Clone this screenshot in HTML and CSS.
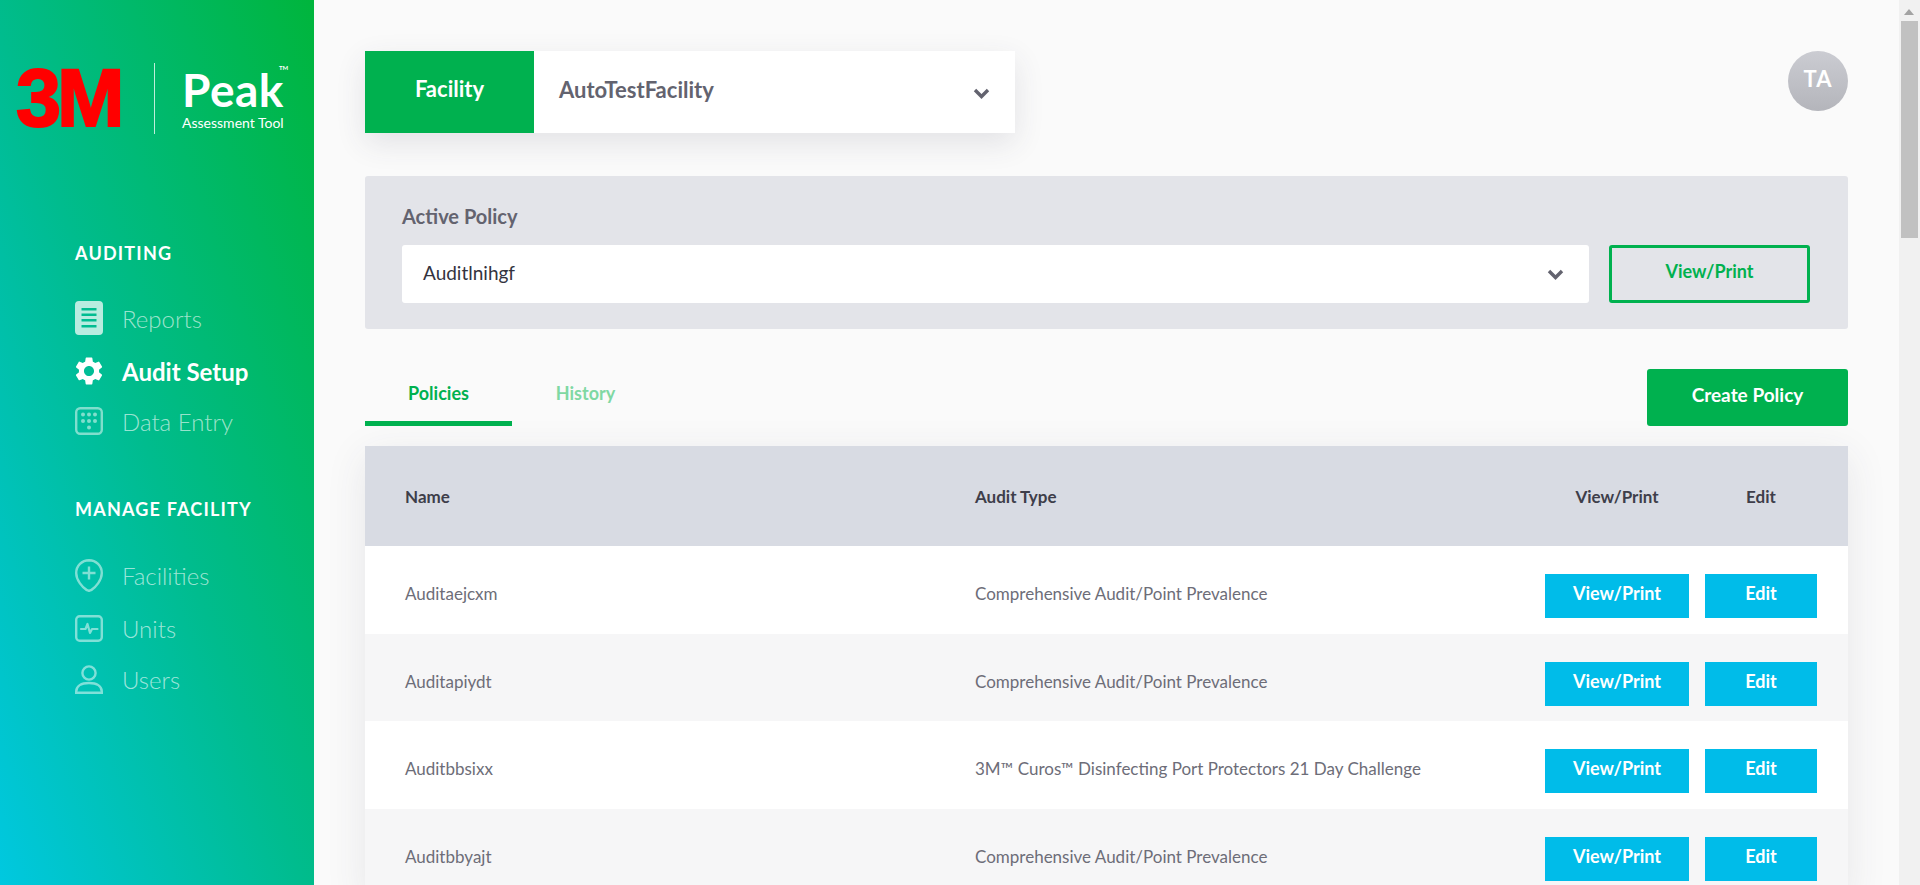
FILE: index.html
```html
<!DOCTYPE html>
<html lang="en">
<head>
<meta charset="utf-8">
<title>3M Peak Assessment Tool</title>
<link rel="stylesheet" href="styles.css">
</head>
<body>
<div class="app">
  <aside class="sidebar">
    <div class="brand">
      <div class="logo-3m">3M</div>
      <div class="brand-rule"></div>
      <div class="brand-name">
        <div class="peak">Peak<span class="tm">TM</span></div>
        <div class="tool">Assessment Tool</div>
      </div>
    </div>
    <nav class="nav">
      <h2 class="nav-title">AUDITING</h2>
      <a class="nav-item nav-reports">
        <svg class="nav-icon" viewBox="0 0 28 34" width="28" height="34"><path fill="#fff" fill-rule="evenodd" d="M4 0h20a4 4 0 0 1 4 4v26a4 4 0 0 1-4 4H4a4 4 0 0 1-4-4V4a4 4 0 0 1 4-4zM6.500 7v2.500h15V7zM6.500 12.500V15h15v-2.500zM6.500 18v2.500h15V18zM6.500 24v2.500h15V24z"/></svg>
        <span>Reports</span>
      </a>
      <a class="nav-item nav-setup active">
        <svg class="nav-icon" viewBox="2.200 2 19.600 20" width="28" height="28"><path fill="#fff" d="M19.140 12.940c.04-.3.06-.61.06-.94 0-.32-.02-.64-.07-.94l2.030-1.580a.49.49 0 0 0 .12-.61l-1.920-3.320a.488.488 0 0 0-.59-.22l-2.390.96c-.5-.38-1.030-.7-1.620-.94l-.36-2.540a.484.484 0 0 0-.48-.41h-3.840c-.24 0-.43.17-.47.41l-.36 2.540c-.59.24-1.130.57-1.620.94l-2.390-.96c-.22-.08-.47 0-.59.22L2.740 8.870c-.12.21-.08.47.12.61l2.030 1.580c-.05.3-.09.63-.09.94s.02.64.07.94l-2.030 1.580a.49.49 0 0 0-.12.61l1.920 3.320c.12.22.37.29.59.22l2.390-.96c.5.38 1.030.7 1.620.94l.36 2.540c.05.24.24.41.48.41h3.840c.24 0 .44-.17.47-.41l.36-2.540c.59-.24 1.130-.56 1.620-.94l2.390.96c.22.08.47 0 .59-.22l1.920-3.320c.12-.22.07-.47-.12-.61l-2.010-1.580zM12 15.600c-1.980 0-3.600-1.620-3.600-3.600s1.620-3.600 3.600-3.600 3.600 1.620 3.600 3.600-1.620 3.600-3.600 3.600z"/></svg>
        <span>Audit Setup</span>
      </a>
      <a class="nav-item nav-entry">
        <svg class="nav-icon" viewBox="0 0 28 28" width="28" height="28"><rect x="1.200" y="1.200" width="25.600" height="25.600" rx="4" fill="none" stroke="#fff" stroke-width="2.400"/><g fill="#fff"><circle cx="8" cy="7.500" r="2"/><circle cx="14" cy="7.500" r="2"/><circle cx="20" cy="7.500" r="2"/><circle cx="8" cy="14" r="2"/><circle cx="14" cy="14" r="2"/><circle cx="20" cy="14" r="2"/><circle cx="14" cy="20.500" r="2"/></g></svg>
        <span>Data Entry</span>
      </a>
      <h2 class="nav-title nav-title-2">MANAGE FACILITY</h2>
      <a class="nav-item nav-fac">
        <svg class="nav-icon" viewBox="0 0 28 33" width="28" height="33"><path fill="none" stroke="#fff" stroke-width="2.400" d="M14 1.200C6.900 1.200 1.200 6.900 1.200 14c0 7 6 14.300 10.600 17.100 1.400.9 3 .9 4.400 0C20.800 28.300 26.800 21 26.800 14 26.800 6.900 21.100 1.200 14 1.200zM14 7.500v13M7.500 14h13"/></svg>
        <span>Facilities</span>
      </a>
      <a class="nav-item nav-units">
        <svg class="nav-icon" viewBox="0 0 28 27" width="28" height="27"><rect x="1.200" y="1.200" width="25.600" height="24.600" rx="3.500" fill="none" stroke="#fff" stroke-width="2.400"/><path fill="none" stroke="#fff" stroke-width="2.200" stroke-linejoin="round" stroke-linecap="round" d="M6 14h4.500l2-5 2.500 9 2-4h5.500"/></svg>
        <span>Units</span>
      </a>
      <a class="nav-item nav-users">
        <svg class="nav-icon" viewBox="0 0 28 29" width="28" height="29"><circle cx="14" cy="8" r="6.600" fill="none" stroke="#fff" stroke-width="2.400"/><path fill="none" stroke="#fff" stroke-width="2.400" d="M1.200 27.800v-1.300c0-5.500 5-8.500 12.800-8.500s12.800 3 12.800 8.500v1.300z"/></svg>
        <span>Users</span>
      </a>
    </nav>
  </aside>

  <main class="main">
    <div class="topbar">
      <div class="facility">
        <div class="facility-label">Facility</div>
        <div class="facility-value">
          <span>AutoTestFacility</span>
          <svg class="chev chev-lg" viewBox="0 0 17 11" width="17" height="11"><path d="M2 2l6.500 6.500L15 2" fill="none" stroke="#63636f" stroke-width="3.400"/></svg>
        </div>
      </div>
      <div class="avatar">TA</div>
    </div>

    <section class="policy">
      <div class="policy-label">Active Policy</div>
      <div class="policy-row">
        <div class="select">
          <span>Auditlnihgf</span>
          <svg class="chev" viewBox="0 0 17 11" width="17" height="11"><path d="M2 2l6.500 6.500L15 2" fill="none" stroke="#63636f" stroke-width="3.400"/></svg>
        </div>
        <a class="btn-outline">View/Print</a>
      </div>
    </section>

    <div class="tabs-row">
      <div class="tabs">
        <a class="tab tab-active">Policies</a>
        <a class="tab tab-muted">History</a>
      </div>
      <a class="btn-create">Create Policy</a>
    </div>

    <section class="table">
      <div class="thead">
        <div>Name</div>
        <div>Audit Type</div>
        <div class="center">View/Print</div>
        <div class="center">Edit</div>
      </div>
      <div class="row">
        <div>Auditaejcxm</div>
        <div>Comprehensive Audit/Point Prevalence</div>
        <a class="btn-blue">View/Print</a>
        <a class="btn-blue">Edit</a>
      </div>
      <div class="row">
        <div>Auditapiydt</div>
        <div>Comprehensive Audit/Point Prevalence</div>
        <a class="btn-blue">View/Print</a>
        <a class="btn-blue">Edit</a>
      </div>
      <div class="row">
        <div>Auditbbsixx</div>
        <div>3M™ Curos™ Disinfecting Port Protectors 21 Day Challenge</div>
        <a class="btn-blue">View/Print</a>
        <a class="btn-blue">Edit</a>
      </div>
      <div class="row">
        <div>Auditbbyajt</div>
        <div>Comprehensive Audit/Point Prevalence</div>
        <a class="btn-blue">View/Print</a>
        <a class="btn-blue">Edit</a>
      </div>
    </section>
  </main>

  <div class="scrollbar">
    <svg class="scroll-up" viewBox="0 0 10 6" width="10" height="6"><path d="M5 0l5 6H0z" fill="#a3a3a3"/></svg>
    <div class="scroll-thumb"></div>
  </div>
</div>
</body>
</html>
```
FILE: styles.css
```css
* { box-sizing: border-box; }
html, body { margin: 0; height: 100%; overflow: hidden; }
body { font-family: Lato, "Open Sans", sans-serif; color: #63636f; background: #fafafa; }
.app { display: flex; height: 885px; overflow: hidden; }

.sidebar { flex: 0 0 314px; background: linear-gradient(to top right, #00c8e0 0%, #00bc8e 48%, #00b53c 100%); color: #fff; padding-top: 69px; }
.brand { display: flex; height: 66px; padding-left: 16px; position: relative; }
.logo-3m { width: 138px; font-family: "Liberation Sans", sans-serif; font-weight: 700; font-size: 81px; line-height: 58px; letter-spacing: -4px; color: #f00; -webkit-text-stroke: 2px #f00; }
.brand-rule { width: 1px; height: 71px; margin-top: -6px; background: rgba(255,255,255,.75); }
.brand-name { margin-left: 27px; margin-top: -2px; }
.peak { font-size: 46px; line-height: 46px; font-weight: 700; letter-spacing: .5px; position: relative; }
.tm { position: absolute; left: 97px; top: -3px; font-size: 6px; line-height: 8px; font-weight: 700; letter-spacing: 0; }
.tool { font-size: 14px; line-height: 18px; margin-top: 1px; }

.nav { margin-top: 107px; padding-left: 75px; }
.nav-title { margin: 0; font-size: 18px; line-height: 22px; font-weight: 700; letter-spacing: 1.200px; }
.nav-title-2 { margin-top: 63px; }
.nav-item { display: flex; align-items: center; font-size: 24px; font-weight: 300; color: rgba(255,255,255,.62); }
.nav-item.active { color: #fff; font-weight: 700; }
.nav-icon { flex: none; opacity: .72; }
.active .nav-icon { opacity: 1; }
.nav-item span { margin-left: 19px; }
.nav-reports { height: 34px; margin-top: 37px; }
.nav-setup { height: 28px; margin-top: 22px; }
.nav-entry { height: 28px; margin-top: 22px; }
.nav-fac { height: 33px; margin-top: 39px; }
.nav-units { height: 27px; margin-top: 23px; }
.nav-users { height: 29px; margin-top: 23px; }
.nav-entry .nav-icon, .nav-fac .nav-icon, .nav-units .nav-icon, .nav-users .nav-icon { opacity: .5; }

.main { flex: 1; min-width: 0; padding: 51px 51px 0; }
.topbar { display: flex; justify-content: space-between; align-items: flex-start; }
.facility { display: flex; width: 650px; height: 82px; background: #fff; box-shadow: 0 10px 30px rgba(60,60,80,.12); }
.facility-label { width: 169px; background: #00b14f; color: #fff; font-size: 22px; font-weight: 700; text-align: center; line-height: 76px; }
.facility-value { flex: 1; display: flex; justify-content: space-between; align-items: center; padding: 0 25px; font-size: 22px; font-weight: 700; }
.facility-value span { margin-bottom: 6px; }
.chev { flex: none; }
.chev-lg { margin-top: 3px; }
.avatar { width: 60px; height: 60px; border-radius: 50%; background: linear-gradient(#cbccd2, #b4b5bb); color: #fff; font-size: 22px; font-weight: 700; letter-spacing: 1px; text-align: center; line-height: 56px; }

.policy { margin-top: 43px; height: 153px; background: #e3e4e9; border-radius: 3px; padding: 26px 38px 0 37px; }
.policy-label { font-size: 20px; font-weight: 700; line-height: 28px; }
.policy-row { display: flex; gap: 20px; margin-top: 15px; }
.select { flex: 1; height: 58px; background: #fff; border-radius: 3px; display: flex; justify-content: space-between; align-items: center; padding: 0 25px 0 21px; font-size: 19px; color: #333340; }
.select span { margin-bottom: 4px; }
.btn-outline { flex: 0 0 201px; height: 58px; border: 3px solid #00b14f; border-radius: 3px; color: #00b14f; font-size: 18px; font-weight: 700; text-align: center; line-height: 46px; }

.tabs-row { display: flex; justify-content: space-between; margin-top: 40px; height: 57px; }
.tabs { display: flex; }
.tab { width: 147px; height: 57px; text-align: center; font-size: 18px; font-weight: 700; line-height: 48px; }
.tab-active { color: #00b14f; border-bottom: 5px solid #00b14f; }
.tab-muted { color: #7fd8a3; }
.btn-create { width: 201px; height: 57px; background: #00b14f; border-radius: 3px; color: #fff; font-size: 19px; font-weight: 700; text-align: center; line-height: 52px; }

.table { margin-top: 20px; background: #fff; border-radius: 3px 3px 0 0; box-shadow: 0 10px 40px rgba(60,60,80,.1); }
.thead, .row { display: grid; grid-template-columns: 554px 554px 144px 112px; column-gap: 16px; padding-left: 40px; }
.thead { height: 100px; align-items: center; background: #d8dbe3; color: #3e3e4a; font-size: 17px; font-weight: 700; }
.center { text-align: center; }
.row { height: 87.500px; padding-top: 28px; font-size: 17px; color: #6d6d78; line-height: 40px; }
.row:nth-child(odd) { background: #f6f6f7; }
.btn-blue { display: block; height: 44px; background: #00bce9; color: #fff; font-size: 18px; font-weight: 700; text-align: center; line-height: 38px; }

.scrollbar { flex: 0 0 21px; background: #f1f1f1; position: relative; padding: 21px 2px 0; }
.scroll-up { position: absolute; left: 5px; top: 9px; }
.scroll-thumb { height: 217px; background: #c1c1c1; }
```
